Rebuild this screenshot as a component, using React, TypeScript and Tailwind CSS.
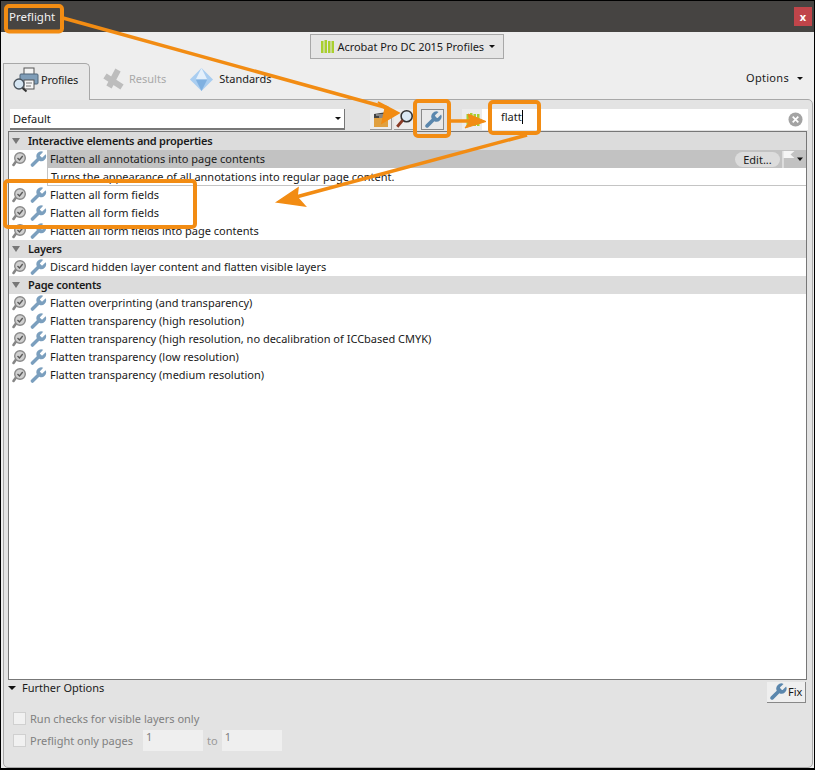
const font = "font-['Noto_Sans','Open_Sans',sans-serif]"

function Wrench({ className }: { className?: string }) {
  return (
    <svg viewBox="1.5 1.5 21 21" className={className} fill="currentColor">
      <path d="M14.7 6.3a1 1 0 0 0 0 1.4l1.6 1.6a1 1 0 0 0 1.4 0l3.77-3.77a6 6 0 0 1-7.94 7.94l-6.91 6.91a2.12 2.12 0 0 1-3-3l6.91-6.91a6 6 0 0 1 7.94-7.94l-3.76 3.76z" />
    </svg>
  )
}

function CheckIcon() {
  return (
    <svg viewBox="0 0 16 16" className="w-[16px] h-[16px] shrink-0">
      <path d="M5 10.5 2.5 14" stroke="#858585" strokeWidth="2.6" strokeLinecap="round" />
      <circle cx="9" cy="7" r="5.3" fill="#d0d0d0" stroke="#8a8a8a" strokeWidth="1.4" />
      <path d="M6.5 7l2 2 3.2-4" fill="none" stroke="#5a5a5a" strokeWidth="1.4" />
    </svg>
  )
}

function Bars({ className }: { className?: string }) {
  return (
    <svg viewBox="0 0 13 13" className={className}>
      <path d="M0 1h2.5v12H0zM3.5 0h2.5v13H3.5zM7 1h2.5v12H7zM10.5 1H13v12h-2.5z" fill="#a9cf2e" />
    </svg>
  )
}

function Caret() {
  return <span className="w-0 h-0 border-x-[3px] border-x-transparent border-t-[3px] border-t-[#111]" />
}

function Rule({ label, selected }: { label: string; selected?: boolean }) {
  return (
    <div className="flex items-center h-[18px]">
      <div className="flex items-center w-[38px] pl-[2px] gap-[2px] h-full shrink-0">
        <CheckIcon />
        <Wrench className="w-[18px] h-[17px] shrink-0 text-[#7b9fbe]" />
      </div>
      <div className={`flex-1 flex items-center h-full pl-[3px] ${selected ? 'bg-[#c2c2c2]' : ''}`}>
        <span className="text-[#1a1a1a]">{label}</span>
        {selected && (
          <div className="ml-auto flex items-center h-full">
            <span className="w-[45px] text-center h-[15px] leading-[15px] rounded-full bg-[#dcdcdc] text-[#1a1a1a]">Edit...</span>
            <svg viewBox="0 0 24 18" className="w-[24px] h-[18px] ml-[2px]">
              <path d="M1 1v17" stroke="#eee" strokeWidth="1.2" />
              <path d="M1.5 1h11l-4 3.5 4 3.5h-11z" fill="#f5f5f5" />
              <path d="M15 7.5h6l-3 3.5z" fill="#111" />
            </svg>
          </div>
        )}
      </div>
    </div>
  )
}

function Section({ label }: { label: string }) {
  return (
    <div className="flex items-center h-[18px] bg-[#dcdcdc]">
      <span className="w-0 h-0 ml-[3px] border-x-[4px] border-x-transparent border-t-[6px] border-t-[#777]" />
      <span className="ml-[8px] font-semibold tracking-[-0.25px] text-[#1a1a1a]">{label}</span>
    </div>
  )
}

function Overlay() {
  const c = '#f28c13'
  return (
    <svg className="absolute left-0 top-0 pointer-events-none" width="815" height="770" viewBox="0 0 815 770">
      <g fill="none" stroke={c} strokeWidth="4">
        <rect x="6" y="6" width="56" height="25.5" rx="3" />
        <rect x="415" y="101" width="34" height="35" rx="3" />
        <rect x="490" y="102" width="49" height="31" rx="3" />
        <rect x="5" y="181" width="190" height="46" rx="3" />
      </g>
      <g stroke={c} strokeWidth="3.5" fill={c}>
        <path d="M63 18 388 108" />
        <path d="M451 121H470" />
        <path d="M527 135 296 197" />
      </g>
      <path d="M399 113 378 102 385 109 382 123z" fill={c} stroke={c} strokeWidth="1.5" />
      <path d="M486 121.5 468 114 470 121 465 128z" fill={c} stroke={c} strokeWidth="1" />
      <path d="M277 202 298 188 297 197 305 206z" fill={c} stroke={c} strokeWidth="1.5" />
    </svg>
  )
}

export default function App() {
  return (
    <div className={`relative w-[815px] h-[770px] overflow-hidden bg-black pt-[1px] pl-[1px] pr-[1px] pb-[2px] text-[11px] leading-[18px] ${font}`}>
      <div className="flex flex-col h-full bg-[#eeeeee]">
        <div className="flex items-center justify-between h-[31px] bg-[#464442] shrink-0 pl-[8px]">
          <span className="text-[#f2f2f2] text-[11.5px]">Preflight</span>
          <span className="flex items-center justify-center w-[18px] h-[19px] mr-[2px] bg-[#c0454a] text-white text-[11px] font-bold">x</span>
        </div>

        <div className="flex justify-center mt-[2px] h-[26px] shrink-0">
          <button className="flex items-center w-[194px] pl-[10px] h-[25px] border border-[#a8a8a8] bg-[#e6e6e6] text-[#1a1a1a] -translate-x-[1px]">
            <Bars className="w-[13px] h-[13px] shrink-0" />
            <span className="ml-[4px] tracking-[-0.05px] whitespace-nowrap">Acrobat Pro DC 2015 Profiles</span>
            <span className="ml-[5px] shrink-0 w-0 h-0 border-x-[3px] border-x-transparent border-t-[3px] border-t-[#111]" />
          </button>
        </div>

        <div className="flex items-end h-[39px] shrink-0 pl-[2px] pr-[11px]">
          <div className="flex items-center h-[37px] w-[87px] -mb-[1px] z-10 pb-[4px] bg-[#e8e8e8] border border-b-0 border-[#a8a8a8] rounded-tr-[5px] pl-[7px] text-[#1a1a1a]">
            <svg viewBox="0 0 30 28" className="w-[30px] h-[28px] shrink-0">
              <rect x="13" y="2" width="10" height="7" fill="#f4f4f4" stroke="#555" />
              <rect x="9" y="8" width="18" height="10" rx="1" fill="#7f9db8" stroke="#4e6478" />
              <rect x="13" y="14" width="10" height="9" fill="#f6f6f6" stroke="#555" />
              <path d="M15 17h6M15 20h5" stroke="#777" />
              <circle cx="8" cy="18" r="5" fill="#d5e5f2" stroke="#48525c" strokeWidth="1.3" />
              <path d="M11.5 22l4 3.5" stroke="#333" strokeWidth="2" />
            </svg>
            <span className="tracking-[-0.2px]">Profiles</span>
          </div>
          <div className="flex items-center h-[36px] pb-[4px] ml-[10px] gap-[3px] text-[#a9a9a9]">
            <svg viewBox="0 0 26 26" className="w-[26px] h-[26px] shrink-0">
              <path d="M5 10 22 21M18 4 9 21" fill="none" stroke="#bdbdbd" strokeWidth="6" />
            </svg>
            <span>Results</span>
          </div>
          <div className="flex items-center h-[36px] pb-[4px] ml-[23px] gap-[5px] text-[#1a1a1a]">
            <svg viewBox="0 0 26 26" className="w-[25px] h-[25px] shrink-0">
              <path d="M13 1 25 13 13 25 1 13z" fill="#a9cdf0" />
              <path d="M13 1 19 13H7z" fill="#e4f0fb" />
              <path d="M7 13h12l-6 12z" fill="#7fb0e0" />
            </svg>
            <span>Standards</span>
          </div>
          <div className="ml-auto flex items-center h-[36px] pb-[6px] gap-[8px] text-[#1a1a1a]">
            <span className="tracking-[0.3px]">Options</span>
            <Caret />
          </div>
        </div>

        <div className="flex-1 flex flex-col ml-[2px] mr-[1px] bg-[#e3e3e3] border border-[#a8a8a8] rounded-b-[5px] rounded-tr-[5px] px-[4px] min-h-0">
          <div className="flex items-center h-[21px] mt-[9px] shrink-0 pl-[2px]">
            <div className="flex items-center justify-between w-[335px] h-[21px] bg-white border-b-2 border-r border-[#777] pl-[3px] pr-[3px] text-[#1a1a1a]">
              Default
              <Caret />
            </div>
            <div className="flex items-center ml-[25px] gap-[2px]">
              <div className="flex items-center justify-center w-[22px] h-[21px] bg-[#ececec] border-b border-r border-[#999]">
                <svg viewBox="0 0 18 18" className="w-[18px] h-[18px]">
                  <path d="M2 7h14v10H2z" fill="#e0a040" />
                  <path d="M2 4l13-2v6H2z" fill="#444" />
                  <path d="M4 5h10M7 7h7" stroke="#eee" strokeWidth="0.8" />
                </svg>
              </div>
              <div className="flex items-center justify-center w-[22px] h-[21px] bg-[#ececec] border-b border-r border-[#999]">
                <svg viewBox="0 0 18 18" className="w-[20px] h-[20px]">
                  <circle cx="10.5" cy="6.5" r="5" fill="#dbe9f4" stroke="#333" strokeWidth="1.4" />
                  <path d="M7 10l-5 6" stroke="#8a3b26" strokeWidth="2.6" />
                </svg>
              </div>
              <div className="flex items-center justify-center w-[23px] h-[21px] ml-[3px] bg-[#e9e9e9] border border-[#8a8a8a]">
                <Wrench className="w-[18px] h-[18px] text-[#5b87ad]" />
              </div>
            </div>
            <div className="flex items-center justify-center w-[20px] h-[21px] ml-[18px] pl-[2px] bg-[#ececec]">
              <Bars className="w-[14px] h-[13px]" />
            </div>
            <div className="flex-1 flex items-center justify-between h-[21px] bg-white pl-[19px] pr-[5px] text-[#1a1a1a]">
              <span className="border-r border-black leading-[14px] -mt-[5px]">flatt</span>
              <svg viewBox="0 0 16 16" className="w-[15px] h-[15px]">
                <circle cx="8" cy="8" r="7.5" fill="#a3a3a3" />
                <path d="M5 5l6 6M11 5l-6 6" stroke="#fff" strokeWidth="1.8" />
              </svg>
            </div>
          </div>

          <div className="h-[549px] mt-[1px] shrink-0 mr-[1px] bg-white border border-[#777]">
            <Section label="Interactive elements and properties" />
            <Rule label="Flatten all annotations into page contents" selected />
            <div className="h-[18px] ml-[38px] pl-[3px] border-b border-l border-[#c4c4c4] text-[#1a1a1a]">Turns the appearance of all annotations into regular page content.</div>
            <Rule label="Flatten all form fields" />
            <Rule label="Flatten all form fields" />
            <Rule label="Flatten all form fields into page contents" />
            <Section label="Layers" />
            <Rule label="Discard hidden layer content and flatten visible layers" />
            <Section label="Page contents" />
            <Rule label="Flatten overprinting (and transparency)" />
            <Rule label="Flatten transparency (high resolution)" />
            <Rule label="Flatten transparency (high resolution, no decalibration of ICCbased CMYK)" />
            <Rule label="Flatten transparency (low resolution)" />
            <Rule label="Flatten transparency (medium resolution)" />
          </div>

          <div className="flex items-start justify-between h-[30px] shrink-0">
            <div className="flex items-center -mt-[1px] gap-[6px] text-[#1a1a1a] h-[18px]">
              <span className="w-0 h-0 border-x-[4px] border-x-transparent border-t-[4px] border-t-[#111]" />
              Further Options
            </div>
            <button className="flex items-center mt-[2px] mr-[2px] w-[39px] h-[21px] pl-[2px] gap-[1px] bg-[#efefef] border-b border-r border-[#888] text-[#1a1a1a]">
              <Wrench className="w-[18px] h-[18px] shrink-0 text-[#5b87ad]" />
              Fix
            </button>
          </div>

          <div className="flex flex-col gap-[3px] ml-[5px] text-[#808080]">
            <div className="flex items-center h-[17px] gap-[4px]">
              <span className="w-[13px] h-[13px] bg-[#f1f1f1] border border-[#d0d0d0]" />
              Run checks for visible layers only
            </div>
            <div className="flex items-center h-[21px] gap-[3px]">
              <span className="w-[13px] h-[13px] mr-[1px] bg-[#f1f1f1] border border-[#d0d0d0]" />
              Preflight only pages
              <span className="w-[60px] h-[21px] ml-[7px] pl-[3px] bg-[#efefef] leading-[14px]">1</span>
              <span className="ml-[1px] text-[#9a9a9a]">to</span>
              <span className="w-[60px] h-[21px] ml-[1px] pl-[3px] bg-[#efefef] leading-[14px]">1</span>
            </div>
          </div>
        </div>
      </div>
      <Overlay />
    </div>
  )
}
